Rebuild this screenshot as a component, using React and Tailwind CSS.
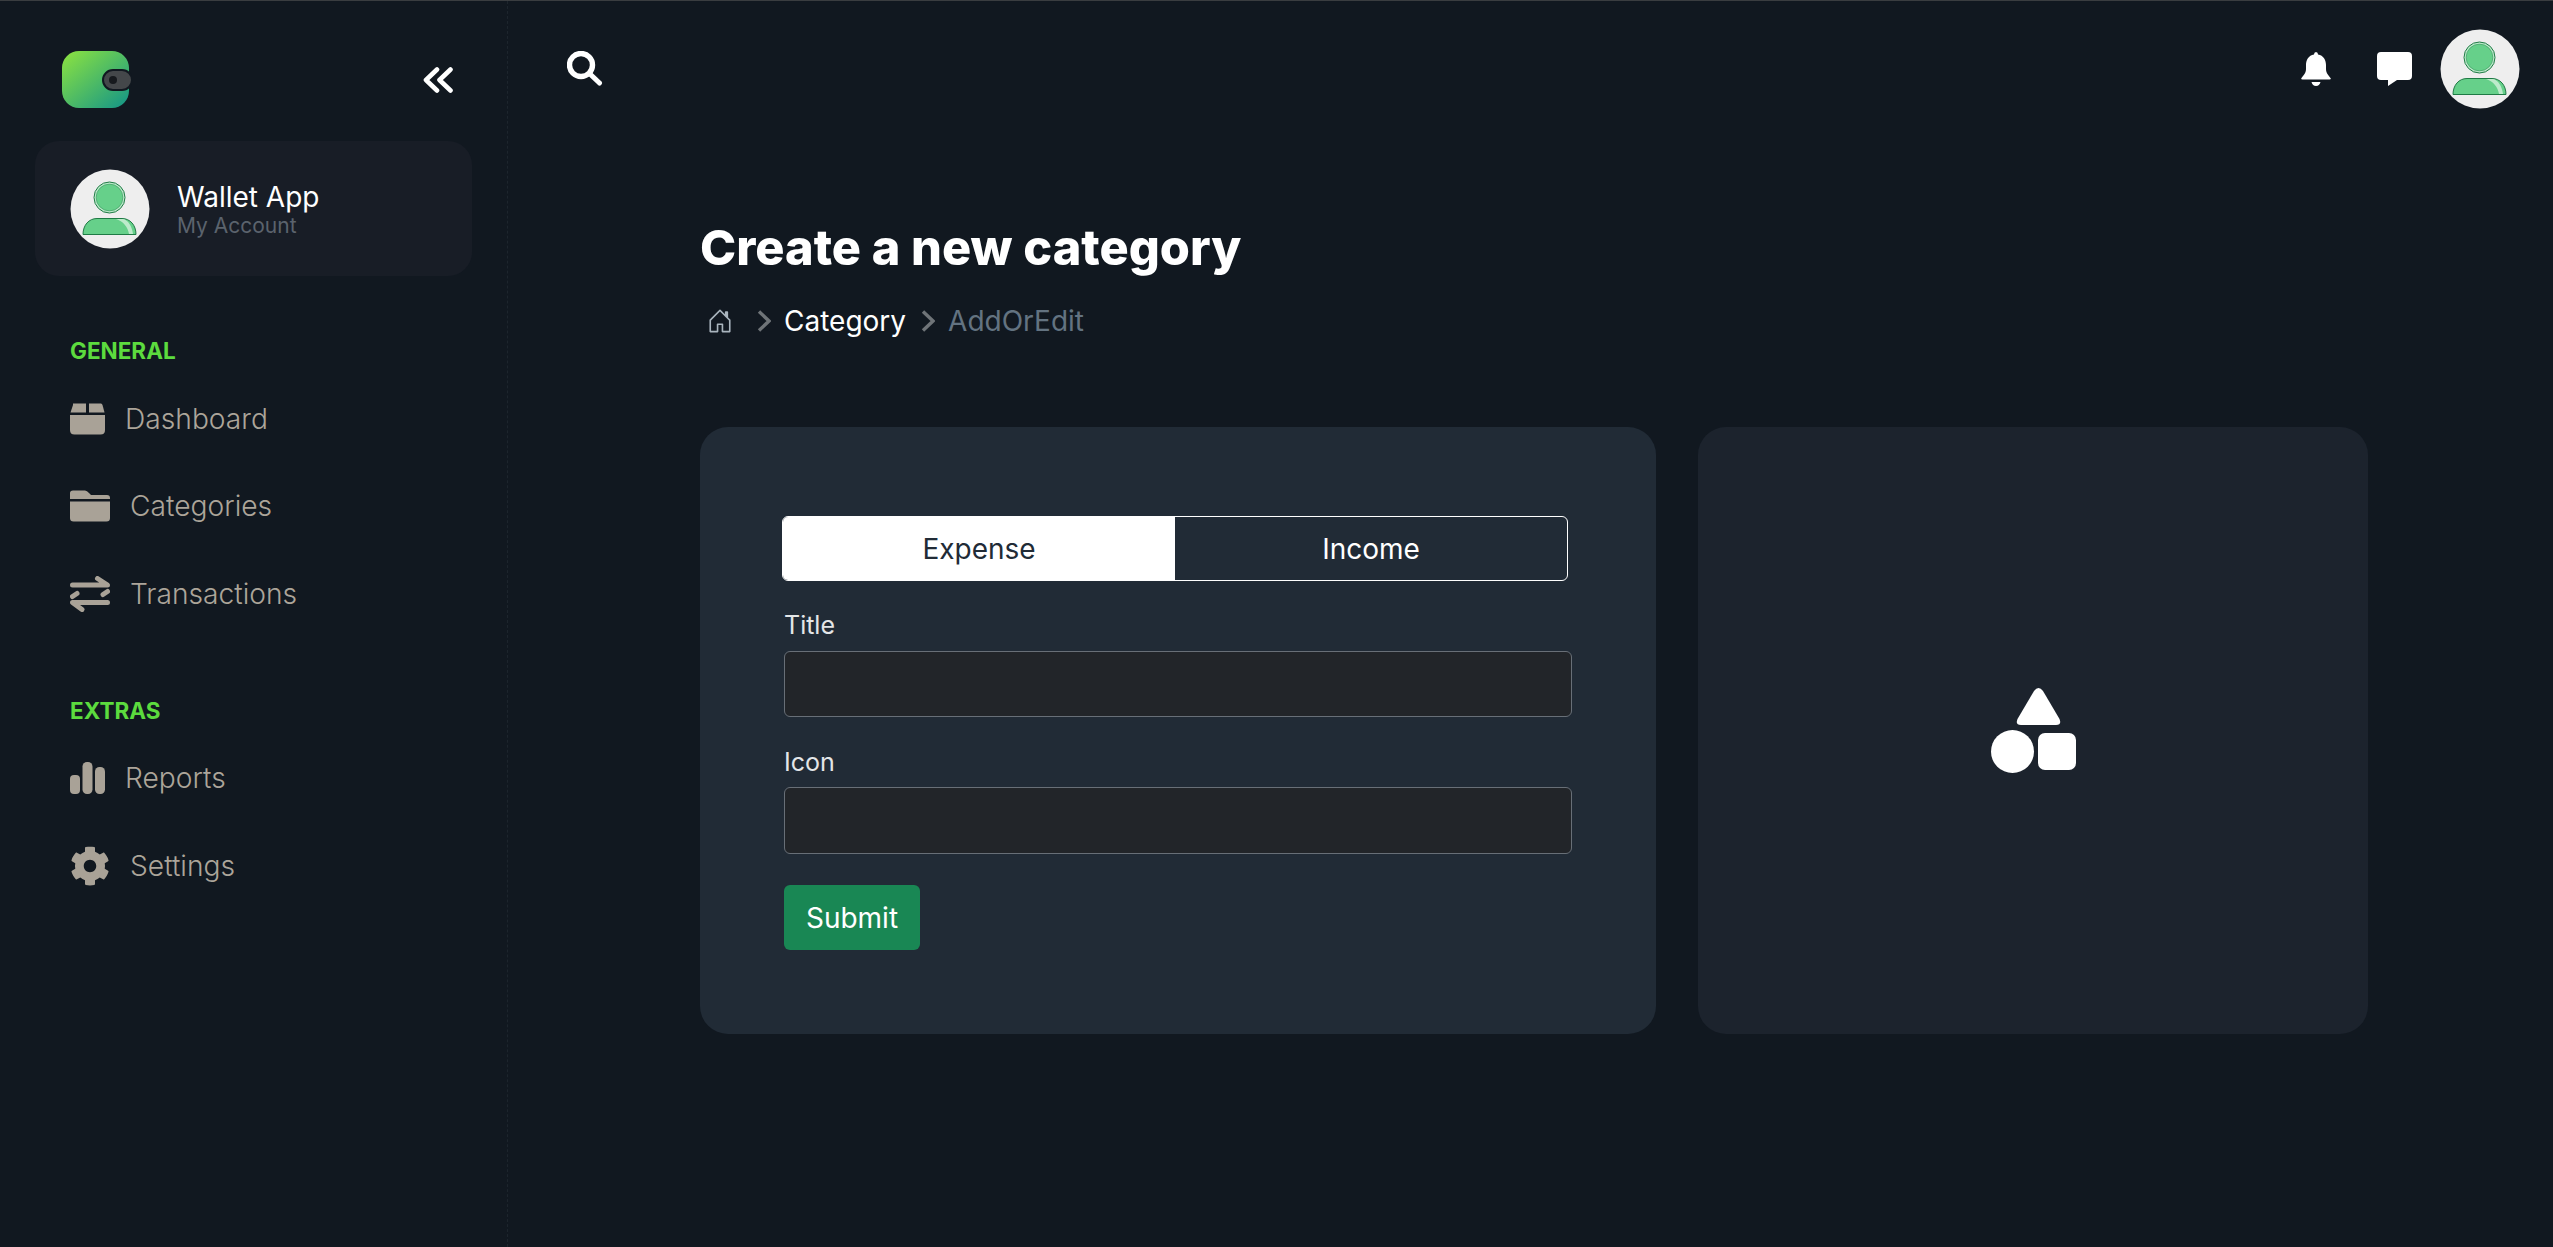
import { FaCog } from "react-icons/fa";
import { BsHouseDoor } from "react-icons/bs";

function Avatar({ className }) {
    return (
        <svg viewBox="0 0 80 80" className={className}>
            <circle cx="40" cy="40" r="39.5" fill="#eeeeee" />
            <circle cx="39.5" cy="28.5" r="15.5" fill="#bdeacb" stroke="#1f7a45" strokeWidth="1" />
            <circle cx="39.5" cy="28.5" r="13.4" fill="#66d08a" stroke="#2f8a55" strokeWidth="0.5" />
            <path d="M13 65.5 C13 56 19 49.5 27 49.5 H52 C60 49.5 66 56 66 65.5 Z" fill="#66d08a" stroke="#1f7a45" strokeWidth="1" />
            <path d="M46 50 H53 C58 51 62 57 63 65 H59 C58 58 53 52 46 50 Z" fill="#bdeacb" />
        </svg>
    );
}

function Logo() {
    return (
        <svg viewBox="0 0 70 58" className="h-[58px] w-[70px]">
            <defs>
                <linearGradient id="wallet" x1="0" y1="0" x2="1" y2="1">
                    <stop offset="0" stopColor="#8ee43f" />
                    <stop offset="1" stopColor="#129488" />
                </linearGradient>
            </defs>
            <rect x="0" y="0" width="67" height="57" rx="17" fill="url(#wallet)" />
            <rect x="41" y="19" width="29" height="20" rx="10" fill="#44474a" stroke="#111820" strokeWidth="2" />
            <circle cx="51" cy="29" r="4" fill="#16191d" />
        </svg>
    );
}

function BoxIcon() {
    return (
        <svg viewBox="0 0 35 32" className="h-[32px] w-[35px]" fill="#a9a297">
            <path d="M3 0.5 H16 V9.5 H0.5 L3 2 Z" />
            <path d="M19 0.5 H31 Q32 0.5 32.5 2 L34.5 9.5 H19 Z" />
            <path d="M0 12 H35 V27 Q35 31.5 30.5 31.5 H4.5 Q0 31.5 0 27 Z" />
        </svg>
    );
}

function FolderIcon() {
    return (
        <svg viewBox="0 0 40 32" className="h-[32px] w-[40px]" fill="#a9a297">
            <path d="M0 9 V3 Q0 0.5 3 0.5 H15 Q17 0.5 19 3 L21 5 H37 Q40 5 40 8 V9 Z" />
            <path d="M0 11.5 H40 V28 Q40 31.5 36.5 31.5 H3.5 Q0 31.5 0 28 Z" />
        </svg>
    );
}

function SwapIcon() {
    return (
        <svg viewBox="0 0 40 36" className="h-[36px] w-[40px]" fill="none" stroke="#a9a297" strokeWidth="5" strokeLinecap="round" strokeLinejoin="round">
            <path d="M2.5 9 H37.5 L27.5 2.5" />
            <path d="M37.5 15.5 L33 18.5" />
            <path d="M37.5 26.5 H2.5 L12 33.5" />
            <path d="M2.5 20.5 L7 17.5" />
        </svg>
    );
}

function BarsIcon() {
    return (
        <svg viewBox="0 0 35 32" className="h-[32px] w-[35px]" fill="#a9a297">
            <rect x="0" y="13" width="10" height="19" rx="4" />
            <rect x="12.5" y="0" width="10" height="32" rx="4.5" />
            <rect x="25" y="5" width="10" height="27" rx="4.5" />
        </svg>
    );
}

function SearchIcon() {
    return (
        <svg viewBox="0 0 36 36" className="h-[36px] w-[36px]" fill="none" stroke="#fff" strokeLinecap="round">
            <circle cx="14" cy="14" r="11.5" strokeWidth="5.4" />
            <path d="M23 23 L32.5 32" strokeWidth="5" />
        </svg>
    );
}

function BellIcon() {
    return (
        <svg viewBox="0 0 30 34" className="h-[34px] w-[30px]" fill="#fff">
            <path d="M15 0 Q17 0 17 2.5 C22.5 3.5 25 8 25 13 V17 C25 21 27.5 23.5 29.5 26 Q30.5 27.5 28.5 27.5 H1.5 Q-0.5 27.5 0.5 26 C2.5 23.5 5 21 5 17 V13 C5 8 7.5 3.5 13 2.5 Q13 0 15 0 Z" />
            <path d="M10.5 30 H19.5 Q18.5 34 15 34 Q11.5 34 10.5 30 Z" />
        </svg>
    );
}

function ChatIcon() {
    return (
        <svg viewBox="0 0 35 34" className="h-[34px] w-[35px]" fill="#fff">
            <path d="M4 0 H31 Q35 0 35 4 V24 Q35 28 31 28 H20 L11 34 V28 H4 Q0 28 0 24 V4 Q0 0 4 0 Z" />
        </svg>
    );
}

function ShapesIcon() {
    return (
        <svg viewBox="0 0 85 85" className="h-[85px] w-[85px]" fill="#fff">
            <path d="M43 3 Q47.5 -3 52 3 L68.5 31 Q71 37 65 37 H30 Q24 37 26.5 31 Z" />
            <circle cx="21.5" cy="63.5" r="21.5" />
            <rect x="47" y="45" width="38" height="37" rx="7" />
        </svg>
    );
}

function Chevron({ className }) {
    return (
        <svg viewBox="0 0 14 22" className={className} fill="none" stroke="#6f7478" strokeWidth="3.4">
            <path d="M2 1.5 L12 11 L2 20.5" />
        </svg>
    );
}

function NavItem({ icon, label }) {
    return (
        <div className="flex h-[87.5px] items-center gap-[20px] text-[28.2px] font-light text-[#aca59a]">
            {icon}
            <span>{label}</span>
        </div>
    );
}

export default function App() {
    return (
        <div className="flex min-h-[1247px] border-t border-[#3a3d40] bg-[#111820] font-['Inter',sans-serif] text-white">
            <aside className="w-[508px] shrink-0 border-r border-dashed border-[#1d252d] px-[35px]">
                <div className="flex h-[140px] items-center justify-between pl-[27px] pr-[19px] pt-[18px]">
                    <Logo />
                    <svg viewBox="0 0 30 26" className="h-[26px] w-[30px]" fill="none" stroke="#fff" strokeWidth="4.6" strokeLinecap="round" strokeLinejoin="round">
                        <path d="M14 2.5 L3 13 L14 23.5" />
                        <path d="M27.5 2.5 L16.5 13 L27.5 23.5" />
                    </svg>
                </div>

                <div className="flex h-[135px] items-center gap-[27px] rounded-[24px] bg-[#181d26] pl-[35px]">
                    <Avatar className="h-[80px] w-[80px]" />
                    <div>
                        <p className="text-[28px] leading-[34px]">Wallet App</p>
                        <p className="text-[21px] leading-[24px] text-[#5b636d]">My Account</p>
                    </div>
                </div>

                <div className="pl-[35px] pt-[61px]">
                    <p className="text-[22.5px] font-bold leading-[28px] text-[#5cdb3e]">GENERAL</p>
                    <div className="mt-[10px]">
                        <NavItem icon={<BoxIcon />} label="Dashboard" />
                        <NavItem icon={<FolderIcon />} label="Categories" />
                        <NavItem icon={<SwapIcon />} label="Transactions" />
                    </div>

                    <p className="mt-[59px] text-[22.5px] font-bold leading-[28px] text-[#5cdb3e]">EXTRAS</p>
                    <div className="mt-[10px]">
                        <NavItem icon={<BarsIcon />} label="Reports" />
                        <NavItem
                            icon={
                                <span className="flex w-[40px] justify-center">
                                    <FaCog className="h-[40px] w-[40px] text-[#a9a297]" />
                                </span>
                            }
                            label="Settings"
                        />
                    </div>
                </div>
            </aside>

            <main className="min-w-0 flex-1">
                <header className="flex h-[108px] items-start justify-between pl-[59px] pr-[33px] pt-[28px]">
                    <div className="mt-[22px]">
                        <SearchIcon />
                    </div>
                    <div className="flex items-center gap-[46px]">
                        <BellIcon />
                        <div className="flex items-center gap-[28px]">
                            <ChatIcon />
                            <Avatar className="h-[80px] w-[80px]" />
                        </div>
                    </div>
                </header>

                <div className="pl-[192px] pr-[185px] pt-[109px]">
                    <h1 className="text-[48.7px] font-extrabold leading-[60px]">Create a new category</h1>
                    <nav className="mt-[25px] flex items-center text-[28px] leading-[36px]">
                        <BsHouseDoor className="ml-[7px] h-[26px] w-[26px] text-[#a9b4bd]" />
                        <Chevron className="ml-[24px] h-[22px] w-[14px]" />
                        <span className="ml-[13px]">Category</span>
                        <Chevron className="ml-[15px] h-[22px] w-[14px]" />
                        <span className="ml-[13px] text-[#637381]">AddOrEdit</span>
                    </nav>

                    <div className="mt-[88px] flex gap-[42px]">
                        <section className="h-[607px] w-[956px] rounded-[28px] bg-[#212b36] pl-[84px] pr-[84px] pt-[89px]">
                            <div className="flex h-[65px] w-[786px] -translate-x-[2px] overflow-hidden rounded-[6px] border border-white text-[28px]">
                                <button className="w-1/2 bg-white text-[#212b36]">Expense</button>
                                <button className="w-1/2">Income</button>
                            </div>
                            <label className="mt-[28px] block text-[25px] leading-[32px] text-[#e4e6e8]">Title</label>
                            <input className="mt-[10px] block h-[66px] w-[788px] rounded-[6px] border border-[#686f77] bg-[#222529]" />
                            <label className="mt-[29px] block text-[25px] leading-[32px] text-[#e4e6e8]">Icon</label>
                            <input className="mt-[9px] block h-[67px] w-[788px] rounded-[6px] border border-[#686f77] bg-[#222529]" />
                            <button className="mt-[31px] h-[65px] w-[136px] rounded-[6px] bg-[#198754] text-[28px]">Submit</button>
                        </section>

                        <section className="flex h-[607px] w-[670px] items-center justify-center rounded-[28px] bg-[#1c232d]">
                            <ShapesIcon />
                        </section>
                    </div>
                </div>
            </main>
        </div>
    );
}
